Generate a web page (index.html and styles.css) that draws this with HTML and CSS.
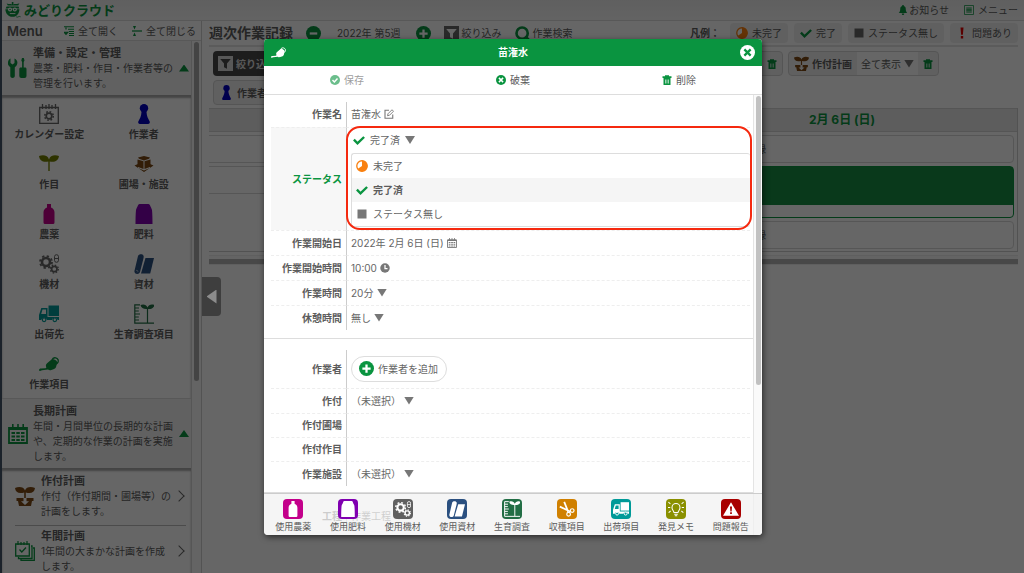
FILE: index.html
```html
<!DOCTYPE html>
<html lang="ja">
<head>
<meta charset="utf-8">
<meta name="viewport" content="width=device-width, initial-scale=1">
<title>みどりクラウド</title>
<link rel="stylesheet" href="styles.css">
</head>
<body>
<svg class="sprite" aria-hidden="true">
  <symbol id="i-can" viewBox="0 0 20 20"><path d="M0 16.500c0-1.300.8-1.900 2-1.900l4.500-.4c.9-.2.9-.8.600-1.500-.5-1.600 0-2.600 1-3.500l3.500-3c1.200-1 2.400-1.300 3.600-.8l1.500.8c1.200.7 1.600 1.700 1.300 3l-.8 3.400c-.4 1.500-1.200 2.300-2.700 2.700l-2.200.8c-1.300.4-2.300.2-3.300-.5l-6 .6L1 17z" fill="currentColor"/><path d="M13 6c.7-2 2-2.500 3.700-2.100 2.300.6 3.100 2.500 2.200 4.500-.5 1-1.100 1.500-2 1.800" fill="none" stroke="currentColor" stroke-width="1.300"/></symbol>
  <symbol id="i-bottle" viewBox="0 0 20 20"><path d="M8 0h4v3.500c2.200 1 3.500 2.600 3.500 5V18.500q0 1.500-1.500 1.500H6q-1.500 0-1.500-1.500V8.500c0-2.400 1.300-4 3.500-5z" fill="currentColor"/></symbol>
  <symbol id="i-bag" viewBox="0 0 20 20"><path d="M5.500 0h9q1.200 0 1.600 1.500c.4 1.600 1.400 2.500 1.900 4.500.4 3.500.5 9 .5 14h-17c0-5 .1-10.500.5-14 .5-2 1.500-2.900 1.900-4.500Q4.300 0 5.500 0z" fill="currentColor"/></symbol>
  <symbol id="i-gears" viewBox="0 0 20 20"><circle cx="7" cy="8" r="4" fill="none" stroke="currentColor" stroke-width="2.600"/><circle cx="7" cy="8" r="6" fill="none" stroke="currentColor" stroke-width="1.800" stroke-dasharray="2.350 2.360"/><circle cx="15.300" cy="15" r="2.700" fill="none" stroke="currentColor" stroke-width="1.700"/><circle cx="15.300" cy="15" r="4" fill="none" stroke="currentColor" stroke-width="1.300" stroke-dasharray="1.570 1.570"/><rect x="15.500" y=".7" width="4" height="7.600" rx="2" fill="none" stroke="currentColor"/><path d="M15.500 4.500h4" stroke="currentColor"/></symbol>
  <symbol id="i-roll" viewBox="0 0 20 20"><path d="M4 2c.7-2 4.500-2.500 5.500-.3.400 1 .1 2-.2 3.300L6 18c-.7 2.500-5 2.500-5.500 0-.2-.8 0-1.600.3-2.500z" fill="currentColor"/><path d="M11.500 4H20l-3.800 15.500H7z" fill="currentColor"/><path d="M2 16.500c1.800-.6 2.500 1 1.300 1.800" fill="none" stroke="#fff" stroke-opacity=".5"/></symbol>
  <symbol id="i-truck" viewBox="0 0 20 20"><path d="M9.500 1.500H20V12H9.500z" fill="currentColor"/><path fill-rule="evenodd" d="M2.300 4H8.500v9H20v3h-1.300a3 3 0 0 0-5.800 0H8a3 3 0 0 0-5.800 0H0v-5zM3.500 5.500 2.200 10H7V5.500z" fill="currentColor"/><circle cx="5.100" cy="15.800" r="1.800" fill="none" stroke="currentColor" stroke-width="1.200"/><circle cx="15.800" cy="15.800" r="1.800" fill="none" stroke="currentColor" stroke-width="1.200"/></symbol>
  <symbol id="i-growth" viewBox="0 0 20 20"><path d="M6 .8H.8v18.400H20M.8 4H5M.8 7h4M.8 10H6M.8 13h4M.8 16H5M13.500 19V4" fill="none" stroke="currentColor" stroke-width="1.200"/><path d="M13.500 5C10 5.500 7 4 6.500 1c3-1.300 6-.3 7 2.500 1-2.800 4-3.800 7-2.500-.5 3-3.500 4.500-7 4z" fill="currentColor"/></symbol>
  <symbol id="i-sprout" viewBox="0 0 20 20"><path d="M9.300 17V7.500C4 8.500.5 6.500 0 2c4.500-1.500 9-.5 10 3.500C11 1.500 15.500.5 20 2c-.5 4.500-4 6.500-9.300 5.500V17z" fill="currentColor"/></symbol>
  <symbol id="i-pot" viewBox="0 0 20 20"><path d="M9.200 12V6.500C4 8 .5 6.500 0 2c4.500-1.800 9-.8 10 2.500C11 1.200 15.500.2 20 2c-.5 4.500-4 6-9.200 4.500V12z" fill="currentColor"/><path fill-rule="evenodd" d="M1.500 12h17v3H17l-1 5H4l-1-5H1.500zM8.500 12v3.200H6L10 19l4-3.800h-2.500V12z" fill="currentColor"/></symbol>
  <symbol id="i-person" viewBox="0 0 20 20"><circle cx="10" cy="4.200" r="4.200" fill="currentColor"/><path d="M7.500 8h5c.2 4 1.500 6.500 3.200 9.500.4 1.500-.2 2.500-1.700 2.500H6c-1.500 0-2.100-1-1.700-2.500C6 14.500 7.300 12 7.500 8z" fill="currentColor"/></symbol>
  <symbol id="i-box" viewBox="0 0 20 20"><path d="M.5 11.500 4 10v4l6 2.500 6-2.500v-4l3.500 1.500L10 18z" fill="currentColor"/><path d="M4 3.500 10 2l6 1.500-1 1.300-5 1.700-5-1.700z" fill="currentColor"/><path d="M3.500 5.500l6 1.800v7.700l-6-2.300zM10.500 7.300l6-1.800v7.200l-6 2.300z" fill="currentColor"/></symbol>
  <symbol id="i-calgear" viewBox="0 0 20 20"><path d="M.7 3.500h18.600v15.800H.7z" fill="none" stroke="currentColor" stroke-width="1.300"/><path d="M3.500 0v5M7 1v4M10 0v5M13 1v4M16.500 0v5" stroke="currentColor" stroke-width="1.300"/><circle cx="10" cy="12" r="2.800" fill="none" stroke="currentColor" stroke-width="1.700"/><circle cx="10" cy="12" r="4.300" fill="none" stroke="currentColor" stroke-width="1.500" stroke-dasharray="1.700 1.680"/></symbol>
  <symbol id="i-cal" viewBox="0 0 20 20"><path d="M1 4h18v15H1z" fill="none" stroke="currentColor" stroke-width="1.800"/><path d="M1 3h18v3H1zM4 0h1.600v4H4zM9.200 0h1.600v4H9.200zM14.400 0H16v4h-1.600zM3.500 8H7v2H3.500zM8.300 8h3.500v2H8.300zM13 8h3.500v2H13zM3.500 11.500H7v2H3.500zM8.300 11.500h3.500v2H8.300zM13 11.500h3.500v2H13zM3.500 15H7v2H3.500zM8.300 15h3.500v2H8.300zM13 15h3.500v2H13z" fill="currentColor"/></symbol>
  <symbol id="i-calcheck" viewBox="0 0 20 20"><path d="M.7 3h13.600v12H.7zM16 5h1v12.500H3.500V16M18 7h1.300v12.300H6V18M4.500 8.500l2.300 2.500L11 6.500" fill="none" stroke="currentColor" stroke-width="1.300"/><path d="M3 0v4M6 1v3M9 1v3M12 0v4" stroke="currentColor" stroke-width="1.200"/></symbol>
  <symbol id="i-tools" viewBox="0 0 20 20"><path d="M2.500.500V5l2 1.500 2-1.500V.500C9 1.500 10 4 9 6.500 8.500 8 7.500 8.700 6.800 9.200V18c0 2.500-4.500 2.500-4.500 0V9.200C.5 8 -.5 6.500 0 4 .4 2.300 1.200 1.200 2.500.500z" fill="currentColor"/><path d="M14 0h1.800l.7 2.500-.8 1.500v5.500h1.300c1 0 1.500.6 1.500 1.500v7q0 2-2 2h-3.200q-2 0-2-2v-7c0-.9.500-1.500 1.500-1.500h1.300V4l-.8-1.500z" fill="currentColor"/></symbol>
  <symbol id="i-open" viewBox="0 0 20 20"><path d="M0 1.500h20M8 6.500h12M10 11h10M10 15h10M10 19h10M4 3v4M.5 12.500l3.500 4 3.500-4z" fill="none" stroke="currentColor" stroke-width="2.400"/></symbol>
  <symbol id="i-close" viewBox="0 0 20 20"><path d="M0 10h20" stroke="currentColor" stroke-width="2.500"/><path d="M2 0h6L5 7zM2 20h6l-3-7z" fill="currentColor"/></symbol>
  <symbol id="i-minus" viewBox="0 0 20 20"><circle cx="10" cy="10" r="10" fill="currentColor"/><path d="M5 10h10" stroke="#fff" stroke-width="3"/></symbol>
  <symbol id="i-plus" viewBox="0 0 20 20"><circle cx="10" cy="10" r="10" fill="currentColor"/><path d="M4.500 10h11M10 4.500v11" stroke="#fff" stroke-width="3"/></symbol>
  <symbol id="i-x" viewBox="0 0 20 20"><circle cx="10" cy="10" r="10" fill="currentColor"/><path d="m5.800 5.800 8.400 8.400m0-8.400-8.400 8.400" stroke="var(--cut,#fff)" stroke-width="3"/></symbol>
  <symbol id="i-ok" viewBox="0 0 20 20"><circle cx="10" cy="10" r="10" fill="currentColor"/><path d="m5 10 3.700 3.800L15 7" fill="none" stroke="#fff" stroke-width="3"/></symbol>
  <symbol id="i-funnel" viewBox="0 0 20 20"><path d="M0 0h20v20H0z" fill="currentColor"/><path d="M3 4h14l-5 6v7l-4-2v-5z" fill="var(--cut,#fff)"/></symbol>
  <symbol id="i-search" viewBox="0 0 20 20"><circle cx="9.500" cy="9.500" r="7.500" fill="none" stroke="currentColor" stroke-width="3.500"/><path d="m14 14 5 5" stroke="currentColor" stroke-width="3.500"/></symbol>
  <symbol id="i-part" viewBox="0 0 20 20"><circle cx="10" cy="10" r="8.700" fill="#fff" stroke="currentColor" stroke-width="2.200"/><path d="M10 10V1A9 9 0 1 1 2.500 15z" fill="currentColor"/></symbol>
  <symbol id="i-check" viewBox="0 0 20 20"><path d="m1.500 9.500 6 6L18.500 5" fill="none" stroke="currentColor" stroke-width="4"/></symbol>
  <symbol id="i-square" viewBox="0 0 20 20"><path d="M1 1h18v18H1z" fill="currentColor"/></symbol>
  <symbol id="i-bang" viewBox="0 0 20 20"><path d="M7.500 1h5l-1 12h-3zM8 15h4v4H8z" fill="currentColor"/></symbol>
  <symbol id="i-trash" viewBox="0 0 20 20"><path d="M1 2.500h5V.500h8v2h5V6H1z" fill="currentColor"/><path fill-rule="evenodd" d="M3 6h14v14H3zM6.300 9v8h1.200V9zM9.400 9v8h1.200V9zM12.500 9v8h1.200V9z" fill="currentColor"/></symbol>
  <symbol id="i-bell" viewBox="0 0 20 20"><path d="M8.500 0h3v2c3 .8 4 3 4 6 0 4 1 5.500 3 8H1.500c2-2.500 3-4 3-8 0-3 1-5.200 4-6zM7.500 17h5c0 4-5 4-5 0z" fill="currentColor"/></symbol>
  <symbol id="i-list" viewBox="0 0 20 20"><path d="M1 1h18v18H1z" fill="none" stroke="currentColor" stroke-width="1.500"/><path d="M4.500 6h11M4.500 8.700h11M4.500 11.400h11M4.500 14.100h11" stroke="currentColor" stroke-width="1.800"/></symbol>
  <symbol id="i-edit" viewBox="0 0 20 20"><path d="M10 2.500H2v16h15.500V11" fill="none" stroke="currentColor" stroke-width="2.200"/><path d="M7 13.500l1-4L16 1.500 19 4.500 11 12.500z" fill="none" stroke="currentColor" stroke-width="1.800"/></symbol>
  <symbol id="i-clock" viewBox="0 0 20 20"><circle cx="10" cy="10" r="9.500" fill="currentColor"/><path d="M10 4v7h5" fill="none" stroke="#fff" stroke-width="2.500"/></symbol>
  <symbol id="i-scissors" viewBox="0 0 20 20"><path d="m1 7 13.500 6.500M6.500 1l5 12.500" fill="none" stroke="currentColor" stroke-width="2.200"/><circle cx="16.500" cy="12" r="2.300" fill="none" stroke="currentColor" stroke-width="1.500"/><circle cx="12" cy="16.500" r="2.300" fill="none" stroke="currentColor" stroke-width="1.500"/></symbol>
  <symbol id="i-bulb" viewBox="0 0 20 20"><path d="M7.500 14.500c0-2-2.500-3-2.500-6.500a5 5 0 0 1 10 0c0 3.500-2.500 4.500-2.500 6.500zM7.800 16.500h4.400M8.500 18.500h3M.500 1.500 3 3.500M19.500 1.500 17 3.500M0 8h2.800M17.200 8H20M.8 14.500 3.300 12.500M19.200 14.500l-2.500-2" fill="none" stroke="currentColor" stroke-width="1.300"/></symbol>
  <symbol id="i-alert" viewBox="0 0 20 20"><path fill-rule="evenodd" d="M10 1.500 20 18.500H0zM8.700 7l.5 6h1.600l.5-6zM8.900 14.200v2h2.200v-2z" fill="currentColor"/></symbol>
  <symbol id="i-melon" viewBox="0 0 20 20"><path d="M2 1.500c3 2 4 0 6.500 1.500V0h2v3C13 1.500 15 3.500 18 1.500l-1.500 3H3.500z" fill="currentColor"/><path d="M.500 9h17.500c0 5-3 9.500-8.500 9.500S.5 14 .5 9zM2 5.500h15l.8 2.500H.8z" fill="currentColor"/><circle cx="6.300" cy="9.500" r="2.500" fill="#fff"/><circle cx="12.300" cy="9.500" r="2.500" fill="#fff"/><circle cx="6.300" cy="9.500" r="1" fill="currentColor"/><circle cx="12.300" cy="9.500" r="1" fill="currentColor"/><path d="M14 18.500c2 1.500 3-1.500 5.500 0" fill="none" stroke="currentColor"/><path d="M6 14.500h7" stroke="#fff" stroke-width="1.200"/></symbol>
</svg>

<div class="shell">
  <header class="topbar">
    <a class="logo" href="#"><svg class="ic16"><use href="#i-melon"/></svg>みどりクラウド</a>
    <nav class="toplinks">
      <a href="#"><svg class="ic10 green"><use href="#i-bell"/></svg>お知らせ</a>
      <a href="#" class="spaced"><svg class="ic10 green"><use href="#i-list"/></svg>メニュー</a>
    </nav>
  </header>

  <div class="columns">
    <aside class="sidebar">
      <div class="menubar">
        <h2>Menu</h2>
        <button type="button"><svg class="ic10 green"><use href="#i-open"/></svg>全て開く</button>
        <button type="button"><svg class="ic10 green"><use href="#i-close"/></svg>全て閉じる</button>
      </div>
      <div class="side-scroll">
        <div class="side-panel">
          <section>
            <div class="side-head">
              <svg class="ic20 green"><use href="#i-tools"/></svg>
              <div class="copy"><h3>準備・設定・管理</h3><p>農薬・肥料・作目・作業者等の管理を行います。</p></div>
              <span class="up"></span>
            </div>
            <div class="tiles">
              <a href="#"><svg class="ic20 gray"><use href="#i-calgear"/></svg>カレンダー設定</a>
              <a href="#"><svg class="ic20 navy"><use href="#i-person"/></svg>作業者</a>
              <a href="#"><svg class="ic20 olive"><use href="#i-sprout"/></svg>作目</a>
              <a href="#"><svg class="ic20 brown"><use href="#i-box"/></svg>圃場・施設</a>
              <a href="#"><svg class="ic20 magenta"><use href="#i-bottle"/></svg>農薬</a>
              <a href="#"><svg class="ic20 purple"><use href="#i-bag"/></svg>肥料</a>
              <a href="#"><svg class="ic20 gray"><use href="#i-gears"/></svg>機材</a>
              <a href="#"><svg class="ic20 blue"><use href="#i-roll"/></svg>資材</a>
              <a href="#"><svg class="ic20 teal"><use href="#i-truck"/></svg>出荷先</a>
              <a href="#"><svg class="ic20 forest"><use href="#i-growth"/></svg>生育調査項目</a>
              <a href="#"><svg class="ic20 green"><use href="#i-can"/></svg>作業項目</a>
            </div>
          </section>
          <section>
            <div class="side-head">
              <svg class="ic20 green"><use href="#i-cal"/></svg>
              <div class="copy"><h3>長期計画</h3><p>年間・月間単位の長期的な計画や、定期的な作業の計画を実施します。</p></div>
              <span class="up"></span>
            </div>
            <div class="links">
              <a href="#"><svg class="ic20 brown"><use href="#i-pot"/></svg><span class="copy"><strong>作付計画</strong><span>作付（作付期間・圃場等）の計画をします。</span></span><i class="chev"></i></a>
              <a href="#"><svg class="ic20 green"><use href="#i-calcheck"/></svg><span class="copy"><strong>年間計画</strong><span>1年間の大まかな計画を作成します。</span></span><i class="chev"></i></a>
            </div>
          </section>
        </div>
        <div class="track side-track"><div class="thumb"></div></div>
      </div>
    </aside>

    <main class="main">
      <div class="titlebar">
        <h1>週次作業記録</h1>
        <button type="button" class="week" aria-label="前の週"><svg class="ic15 green"><use href="#i-minus"/></svg></button>
        <span class="period">2022年 第5週</span>
        <button type="button" class="week" aria-label="次の週"><svg class="ic15 green"><use href="#i-plus"/></svg></button>
        <button type="button"><svg class="ic15 gray"><use href="#i-funnel"/></svg>絞り込み</button>
        <button type="button"><svg class="ic15 green"><use href="#i-search"/></svg>作業検索</button>
        <div class="legend">
          <b>凡例：</b>
          <span><svg class="ic12 orange"><use href="#i-part"/></svg>未完了</span>
          <span><svg class="ic12 green"><use href="#i-check"/></svg>完了</span>
          <span><svg class="ic10 gray"><use href="#i-square"/></svg>ステータス無し</span>
          <span><svg class="ic12 red"><use href="#i-bang"/></svg>問題あり</span>
        </div>
      </div>
      <div class="filters">
        <button type="button" class="dark"><svg class="ic15"><use href="#i-funnel"/></svg>絞り込み</button>
        <div class="group empty"><button type="button" aria-label="条件を削除"><svg class="ic10 green"><use href="#i-trash"/></svg></button></div>
        <div class="group">
          <span class="name"><svg class="ic15 brown"><use href="#i-pot"/></svg>作付計画</span>
          <label class="pick"><select aria-label="作付計画"><option>全て表示</option></select><i class="down"></i></label>
          <button type="button" aria-label="作付計画の条件を削除"><svg class="ic10 green"><use href="#i-trash"/></svg></button>
        </div>
      </div>
      <div class="filters second">
        <div class="group"><span class="name"><svg class="ic15 navy"><use href="#i-person"/></svg>作業者</span></div>
      </div>
      <div class="week-grid">
        <div class="day other"><div class="day-head"></div><div class="card"></div><div class="card"></div></div>
        <div class="day"><div class="day-head">2月 6日 (日)</div><div class="card">作業記録</div><div class="card task"></div><div class="card">作業記録</div></div>
      </div>
      <div class="hscroll"></div>
    </main>
  </div>

  <div class="overlay">
    <div class="dialog" role="dialog" aria-labelledby="dlg-title">
      <div class="dlg-head">
        <svg class="ic15"><use href="#i-can"/></svg>
        <h2 id="dlg-title">苗潅水</h2>
        <button type="button" aria-label="閉じる"><svg class="ic15 cutgreen"><use href="#i-x"/></svg></button>
      </div>
      <div class="dlg-tools">
        <button type="button" disabled><svg class="ic10 green"><use href="#i-ok"/></svg>保存</button>
        <button type="button"><svg class="ic10 green"><use href="#i-x"/></svg>破棄</button>
        <button type="button"><svg class="ic10 green"><use href="#i-trash"/></svg>削除</button>
      </div>
      <div class="dlg-body">
        <form class="form">
          <div class="fields">
            <div class="row"><span class="lab">作業名</span><div class="val">苗潅水<button type="button" aria-label="作業名を編集"><svg class="ic10 mid"><use href="#i-edit"/></svg></button></div></div>
            <div class="row status">
              <span class="lab">ステータス</span>
              <div class="val">
                <button type="button" class="current" aria-expanded="true"><svg class="ic12 green"><use href="#i-check"/></svg>完了済<i class="down"></i></button>
                <div class="options" role="listbox" aria-label="ステータス">
                  <button type="button" role="option"><svg class="ic12 orange"><use href="#i-part"/></svg>未完了</button>
                  <button type="button" role="option" aria-selected="true"><svg class="ic12 green"><use href="#i-check"/></svg>完了済</button>
                  <button type="button" role="option"><svg class="ic12 mid small"><use href="#i-square"/></svg>ステータス無し</button>
                </div>
                <div class="marker"></div>
              </div>
            </div>
            <div class="row"><span class="lab">作業開始日</span><div class="val">2022年 2月 6日 (日)<button type="button" aria-label="日付を選択"><svg class="ic10 mid"><use href="#i-cal"/></svg></button></div></div>
            <div class="row"><span class="lab">作業開始時間</span><div class="val">10:00<button type="button" aria-label="時刻を選択"><svg class="ic10 mid"><use href="#i-clock"/></svg></button></div></div>
            <div class="row"><label class="lab" for="dur">作業時間</label><div class="val"><select id="dur"><option>20分</option></select><i class="down"></i></div></div>
            <div class="row"><label class="lab" for="rest">休憩時間</label><div class="val"><select id="rest"><option>無し</option></select><i class="down"></i></div></div>
          </div>
          <div class="fields">
            <div class="row tall"><span class="lab">作業者</span><div class="val"><button type="button" class="pill"><svg class="ic15 green"><use href="#i-plus"/></svg>作業者を追加</button></div></div>
            <div class="row"><label class="lab" for="crop">作付</label><div class="val"><select id="crop"><option>（未選択）</option></select><i class="down"></i></div></div>
            <div class="row short"><span class="lab">作付圃場</span><div class="val"></div></div>
            <div class="row short"><span class="lab">作付作目</span><div class="val"></div></div>
            <div class="row"><label class="lab" for="place">作業施設</label><div class="val"><select id="place"><option>（未選択）</option></select><i class="down"></i></div></div>
          </div>
          <div class="fields last">
            <div class="row"><label class="lab" for="step">工程</label><div class="val"><select id="step"><option>作業工程</option></select><i class="down"></i></div></div>
          </div>
        </form>
        <div class="track"><div class="thumb"></div></div>
      </div>
      <div class="dlg-foot">
        <button type="button"><span class="tile bg-magenta"><svg><use href="#i-bottle"/></svg></span>使用農薬</button>
        <button type="button"><span class="tile bg-purple"><svg><use href="#i-bag"/></svg></span>使用肥料</button>
        <button type="button"><span class="tile bg-gray"><svg><use href="#i-gears"/></svg></span>使用機材</button>
        <button type="button"><span class="tile bg-blue"><svg><use href="#i-roll"/></svg></span>使用資材</button>
        <button type="button"><span class="tile bg-forest"><svg><use href="#i-growth"/></svg></span>生育調査</button>
        <button type="button"><span class="tile bg-amber"><svg><use href="#i-scissors"/></svg></span>収穫項目</button>
        <button type="button"><span class="tile bg-teal"><svg><use href="#i-truck"/></svg></span>出荷項目</button>
        <button type="button"><span class="tile bg-olive"><svg><use href="#i-bulb"/></svg></span>発見メモ</button>
        <button type="button"><span class="tile bg-red"><svg><use href="#i-alert"/></svg></span>問題報告</button>
      </div>
    </div>
  </div>
  <button type="button" class="collapse" aria-label="メニューを隠す"><i></i></button>
</div>
</body>
</html>
```

FILE: styles.css
```css
* { box-sizing: border-box; }
html, body { height: 100%; margin: 0; }
body {
  overflow: hidden;
  border-left: 2px solid #1b222a;
  background: #fff;
  color: #5c5c5c;
  font: 10px/16px Inter, "Noto Sans CJK JP", sans-serif;
}
h1, h2, h3, p { margin: 0; }
a { color: inherit; text-decoration: none; }
svg { display: block; flex: none; }
button, select { margin: 0; padding: 0; border: 0; background: none; color: inherit; font: inherit; }
select { appearance: none; opacity: 1; }
button { display: flex; align-items: center; }
.sprite { display: none; }

.ic10 { width: 10px; height: 10px; }
.ic12 { width: 12px; height: 12px; }
.ic15 { width: 15px; height: 15px; }
.ic16 { width: 16px; height: 16px; }
.ic20 { width: 20px; height: 20px; }
.small { padding: 1px; }
.green { color: #0a9440; }
.gray { color: #666; }
.mid { color: #777; }
.navy { color: #0000c0; }
.olive { color: #748000; }
.brown { color: #7d4a14; }
.magenta { color: #c3008b; }
.purple { color: #8000b0; }
.blue { color: #2b5080; }
.teal { color: #009a98; }
.forest { color: #226e45; }
.orange { color: #f98010; }
.red { color: #e00000; }
.cutgreen { --cut: #0a9440; }

.down { flex: none; width: 10px; height: 8px; background: #777; clip-path: polygon(0 0, 100% 0, 50% 100%); }
.up { flex: none; width: 10px; height: 7px; background: #0a9440; clip-path: polygon(50% 0, 100% 100%, 0 100%); }
.chev { flex: none; width: 8px; height: 8px; border: solid #666; border-width: 1px 1px 0 0; transform: rotate(45deg); }

.track { flex: none; width: 9px; padding: 1px 2px; border-left: 1px solid #e4e4e4; background: #fafafa; }
.thumb { width: 5px; height: 66%; border-radius: 3px; background: #c1c1c1; }

.shell { position: relative; display: flex; flex-direction: column; height: 100%; overflow: hidden; }

.topbar {
  display: flex; align-items: center; justify-content: space-between;
  flex: none; height: 21px; padding: 0 6px 0 3px;
  border-bottom: 1px solid #dcdcdc; background: linear-gradient(#eee, #f8f8f8);
}
.logo { display: flex; align-items: center; gap: 3px; color: #0a9440; font-size: 13px; font-weight: 700; line-height: 20px; }
.toplinks { display: flex; gap: 15px; }
.toplinks a { display: flex; align-items: center; gap: 1px; }
.toplinks .spaced { gap: 4px; }

.columns { display: flex; flex: 1; min-height: 0; }

.sidebar { display: flex; flex-direction: column; flex: none; width: 200px; border-right: 1px solid #d0d0d0; }
.menubar { display: flex; align-items: center; flex: none; height: 20px; padding-left: 5px; border-bottom: 1px solid #ddd; }
.menubar h2 { width: 57px; font-size: 13px; font-weight: 600; line-height: 18px; }
.menubar button { gap: 4px; width: 68px; white-space: nowrap; }
.side-scroll { display: flex; flex: 1; min-height: 0; }
.side-panel { flex: 1; min-width: 0; overflow: hidden; border-right: 1px solid #d8d8d8; }
.side-track { border-left: 0; }
.side-track .thumb { height: 64%; background: #aaa; }

.side-head { display: flex; align-items: center; gap: 5px; padding: 4px 4px 4px 6px; background: #f2f2f2; }
.copy { flex: 1; min-width: 0; line-height: 15px; }
.side-head .copy { flex: 0 0 141px; }
.copy h3, .copy strong { display: block; font-size: 11px; line-height: 16px; font-weight: 700; }
.tiles, .links { box-shadow: inset 0 3px 2px #aaa; }
.tiles { display: grid; grid-template-columns: 1fr 1fr; padding: 9px 0 6px; border-bottom: 1px solid #ddd; }
.tiles a { display: flex; flex-direction: column; align-items: center; gap: 2px; padding-bottom: 12px; font-weight: 700; }
.tiles a:last-child { padding-bottom: 0; }
.links { padding: 5px 5px 0 13px; }
.links a { display: flex; align-items: center; gap: 6px; padding-bottom: 6px; margin-bottom: 2px; border-bottom: 1px solid #bbb; }
.links .chev { margin-right: 2px; }
.links .copy { flex: 0 0 130px; margin-right: -2px; }

.main { flex: 1; min-width: 0; padding: 0 6px 0 7px; }
.titlebar { display: flex; align-items: center; height: 26px; border-bottom: 2px solid #e4e4e4; white-space: nowrap; }
.titlebar h1 { margin-right: 13px; font-size: 14px; line-height: 20px; }
.titlebar button { gap: 3px; margin-right: 13px; }
.titlebar .period { margin-right: 15px; }
.titlebar .week { margin-right: 16px; }
.titlebar .period + .week { margin-right: 13px; }
.legend { display: flex; align-items: center; gap: 6px; margin-left: auto; }
.legend b { margin-right: 4px; }
.legend span { display: flex; align-items: center; gap: 4px; height: 20px; padding: 0 6px; border-radius: 4px; background: #f1f1f1; }

.filters { display: flex; gap: 5px; margin: 4px 79px 0 4px; height: 25px; font-weight: 700; }
.dark { gap: 3px; flex: none; padding: 0 8px 0 5px; border-radius: 4px; background: #4a4a4a; color: #ddd; --cut: #4a4a4a; }
.group { display: flex; flex: none; overflow: hidden; border: 1px solid #d5d5d5; border-radius: 4px; background: #f1f1f1; }
.group.empty { flex: 1; justify-content: flex-end; }
.group .name { display: flex; align-items: center; gap: 3px; padding: 0 5px; }
.group button { padding: 0 5px; }
.pick { display: flex; align-items: center; gap: 3px; padding: 0 4px; background: #fff; font-weight: 400; }
.second .group { flex: 0 0 180px; }

.week-grid { display: grid; grid-template-columns: 1fr 351px; margin-top: 3px; border-bottom: 1px solid #ccc; }
.day { display: flex; flex-direction: column; gap: 3px; padding-bottom: 2px; border-right: 1px solid #ccc; }
.day-head { height: 24px; border: solid #d5d5d5; border-width: 1px 0; background: #e8e8e8; color: #0a9440; font-size: 12px; font-weight: 700; line-height: 22px; text-align: center; }
.card { height: 28px; margin-right: 3px; padding-left: 58px; border: 1px solid #d8d8d8; border-radius: 4px; line-height: 26px; }
.other .card { margin: 0; border-width: 1px 0; border-radius: 0; }
.task { height: 52px; border-color: #0a9440; background: linear-gradient(#189044 38px, #fff 38px); }
.hscroll { height: 10px; margin-top: 3px; border: solid #eee; border-width: 1px 0; background: linear-gradient(#b4b4b4, #b4b4b4) 0 3px / 100% 5px no-repeat #fafafa; }

.collapse {
  position: absolute; left: 200px; top: 277px; z-index: 3;
  justify-content: center; width: 19px; height: 39px; border-radius: 0 4px 4px 0; background: #3e3e3e;
}
.collapse i { width: 10px; height: 14px; background: #8c8c8c; clip-path: polygon(100% 0, 100% 100%, 0 50%); }

.overlay { position: absolute; inset: 0; z-index: 2; display: flex; align-items: center; justify-content: center; background: rgba(0, 0, 0, .6); }
.dialog { position: relative; width: 498px; max-width: 96%; overflow: hidden; border-radius: 4px; background: #fff; box-shadow: 1px 2px 6px rgba(0, 0, 0, .6); }
.dlg-head { display: flex; align-items: center; justify-content: space-between; height: 27px; padding: 0 7px; background: #0a9440; color: #fff; }
.dlg-head h2 { font-size: 10px; line-height: 16px; }
.dlg-tools { display: grid; grid-template-columns: repeat(3, 1fr); height: 29px; border-bottom: 1px solid #ddd; }
.dlg-tools button { justify-content: center; gap: 4px; }
.dlg-tools button:disabled { opacity: .6; }

.dlg-body { display: flex; }
.form { flex: 1; min-width: 0; padding-top: 7px; }
.fields { padding: 0 3px 8px 7px; }
.fields + .fields { padding-top: 11px; padding-bottom: 6px; border-top: 1px solid #ddd; }
.row { display: grid; grid-template-columns: 75px 1fr; min-height: 25px; }
.row.tall { min-height: 38px; }
.row.short { min-height: 24px; }
.lab { display: flex; align-items: center; justify-content: flex-end; padding-right: 4px; font-weight: 700; }
.val { display: flex; align-items: center; gap: 3px; padding-left: 4px; border-left: 1px solid #ccc; color: #666; }
.row + .row .lab, .row + .row .val { border-top: 1px dashed #eee; }
.status { min-height: 103px; }
.status .lab { background: #f7f7f7; color: #0a9440; }
.status .val { position: relative; flex-direction: column; align-items: stretch; gap: 0; }
.current { gap: 5px; height: 25px; padding-left: 2px; }
.options { padding: 0; border: 1px solid #ddd; border-right: 0; border-radius: 3px; }
.options button { gap: 5px; width: 100%; height: 24px; padding-left: 4px; }
.options [aria-selected="true"] { background: #f5f5f5; color: #5c5c5c; font-weight: 700; }
.marker { position: absolute; inset: -2px -2px 0 -1px; border: 2px solid #f5290f; border-radius: 14px; pointer-events: none; }
.pill { gap: 4px; height: 26px; padding: 0 8px 0 7px; border: 1px solid #ddd; border-radius: 13px; }

.dlg-foot {
  position: absolute; inset: auto 0 0; display: grid; grid-template-columns: repeat(9, 1fr);
  padding: 5px 4px 1px 2px; border-top: 1px solid #ccc; background: rgba(241, 241, 241, .75);
}
.dlg-foot button { flex-direction: column; font-size: 9px; line-height: 15px; }
.tile { display: grid; place-items: center; width: 20px; height: 20px; border-radius: 4px; color: #fff; }
.tile svg { width: 16px; height: 16px; }
.bg-magenta { background: #c3008b; }
.bg-purple { background: #8000b0; }
.bg-gray { background: #606060; }
.bg-blue { background: #2b5080; }
.bg-forest { background: #226e45; }
.bg-amber { background: #d08000; }
.bg-teal { background: #009a98; }
.bg-olive { background: #8a9000; }
.bg-red { background: #a80000; }
```
